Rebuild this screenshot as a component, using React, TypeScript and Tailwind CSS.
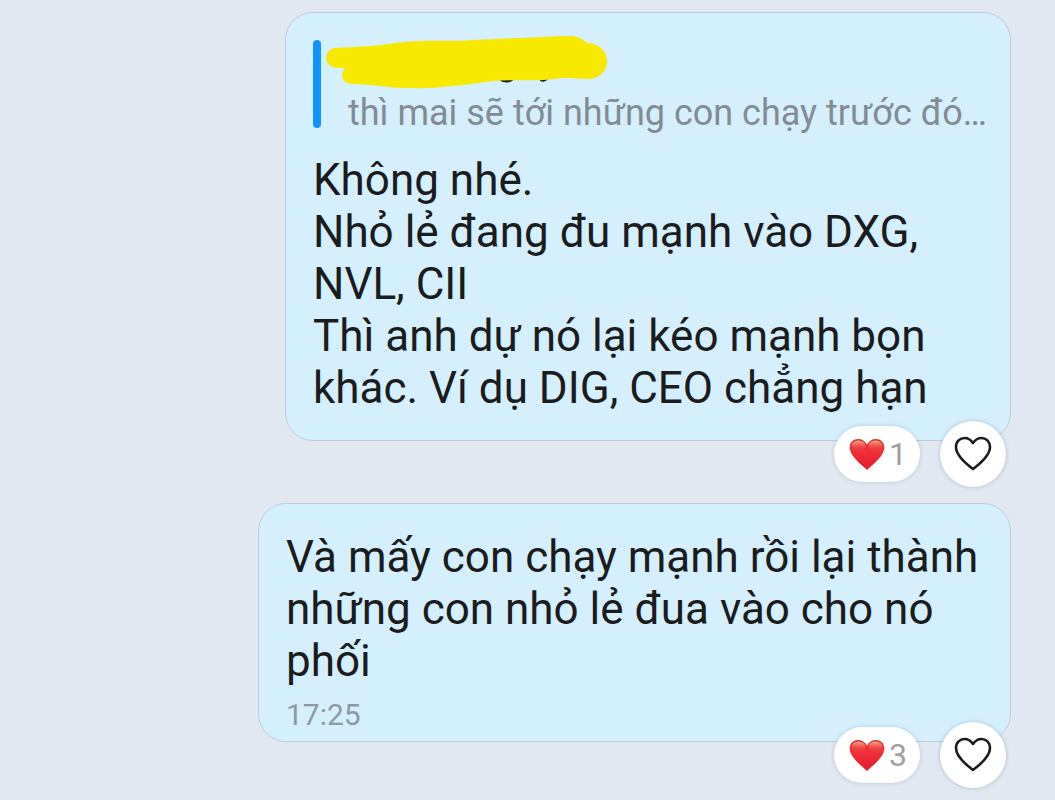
import type { ReactNode } from 'react';

const HEART = 'M18 32 C14 28 3 20 1 12 C-0.5 5 4 1 9 1 C13 1 16 3 18 6.5 C20 3 23 1 27 1 C32 1 36.5 5 35 12 C33 20 22 28 18 32 Z';

function RedHeart() {
    return (
        <svg width="36" height="33" viewBox="0 0 36 33" aria-hidden="true">
            <defs>
                <linearGradient id="heartBase" x1="0" y1="0" x2="0" y2="1">
                    <stop offset="0" stopColor="#d8352f" />
                    <stop offset="0.4" stopColor="#f0313a" />
                    <stop offset="1" stopColor="#e5182c" />
                </linearGradient>
                <linearGradient id="heartShine" x1="0" y1="0" x2="0" y2="1">
                    <stop offset="0" stopColor="#ffc9a3" stopOpacity="0.8" />
                    <stop offset="1" stopColor="#f5483f" stopOpacity="0" />
                </linearGradient>
            </defs>
            <path d={HEART} fill="url(#heartBase)" />
            <ellipse cx="9.5" cy="8" rx="7" ry="5.5" fill="url(#heartShine)" />
            <ellipse cx="26.5" cy="8" rx="7" ry="5.5" fill="url(#heartShine)" />
        </svg>
    );
}

function OutlineHeart() {
    return (
        <svg width="38" height="36" viewBox="0 0 38 36" fill="none" aria-hidden="true">
            <path
                d="M19 33 C13 28.5 2 19.5 2 11 C2 5.5 6 2 10.5 2 C14.5 2 17 4 19 7 C21 4 23.5 2 27.5 2 C32 2 36 5.5 36 11 C36 19.5 25 28.5 19 33 Z"
                stroke="#1b1b1b"
                strokeWidth="2.6"
                strokeLinejoin="round"
            />
        </svg>
    );
}

function Reactions({ count }: { count: number }) {
    return (
        <div className="relative -mt-5 mr-[5px] flex items-center gap-5">
            <button
                type="button"
                aria-label={`${count} lượt thích`}
                className="flex h-14 items-center gap-1 rounded-full bg-white pr-[13px] pl-[15px] text-[32px] leading-10 text-[#a0a0a0] shadow-[0_0_4px_rgba(90,120,160,0.3)]"
            >
                <RedHeart />
                {count}
            </button>
            <button
                type="button"
                aria-label="Thích"
                className="flex size-[66px] items-center justify-center rounded-full bg-white shadow-[0_0_4px_rgba(90,120,160,0.4)]"
            >
                <OutlineHeart />
            </button>
        </div>
    );
}

function Scribble() {
    return (
        <svg width="284" height="58" viewBox="0 0 284 58" className="-ml-6 block" aria-hidden="true">
            <path d="M177 43 Q182 46 188 43 M217 43 Q220 45 223 41" fill="none" stroke="#1a1c1d" strokeWidth="4" />
            <path
                d="M11 12 C33 11 51 10 72 7 C98 3 125 6 150 4 L238 0 Q254 -2 263 7 C275 7 283 15 283 25 C283 36 274 43 264 43 C253 43 246 41 238 42 C214 46 190 43 170 45 C144 48 119 53 84 52 C62 52 48 48 28 48 C18 48 15 38 21 32 L12 32 C-1 31 -1 14 11 12 Z"
                fill="#f7e900"
            />
        </svg>
    );
}

interface MessageProps {
    count: number;
    className: string;
    children: ReactNode;
}

function Message({ count, className, children }: MessageProps) {
    return (
        <article className="flex flex-col items-end">
            <div
                className={`max-w-full rounded-[28px] border border-[#b9cddd] bg-[#d4f0ff] px-[27px] text-[44px] leading-[52px] text-[#1a1c1d] ${className}`}
            >
                {children}
            </div>
            <Reactions count={count} />
        </article>
    );
}

export default function App() {
    return (
        <main className="flex min-h-screen flex-col gap-4 bg-[#e1e8f1] pt-3 pr-11 pb-3 pl-4 font-['Roboto','Noto_Sans',sans-serif]">
            <Message count={1} className="w-[726px] pt-[27px] pb-[26px]">
                <blockquote className="mb-[26px] flex h-[88px] gap-[27px]">
                    <div className="w-2 shrink-0 rounded-full bg-[#1193ff]" />
                    <div className="-mt-1 min-w-0 flex-1">
                        <Scribble />
                        <p className="-mt-2 text-4xl leading-[54px] whitespace-nowrap text-[#838b93]">
                            thì mai sẽ tới những con chạy trước đó…
                        </p>
                    </div>
                </blockquote>
                <p>Không nhé.</p>
                <p>Nhỏ lẻ đang đu mạnh vào DXG, NVL, CII</p>
                <p>Thì anh dự nó lại kéo mạnh bọn khác. Ví dụ DIG, CEO chẳng hạn</p>
            </Message>
            <Message count={3} className="w-[753px] pt-[27px] pb-[6px]">
                <p>Và mấy con chạy mạnh rồi lại thành những con nhỏ lẻ đua vào cho nó phối</p>
                <time className="mt-2 block text-3xl leading-[40px] text-[#8d99a5]">17:25</time>
            </Message>
        </main>
    );
}
